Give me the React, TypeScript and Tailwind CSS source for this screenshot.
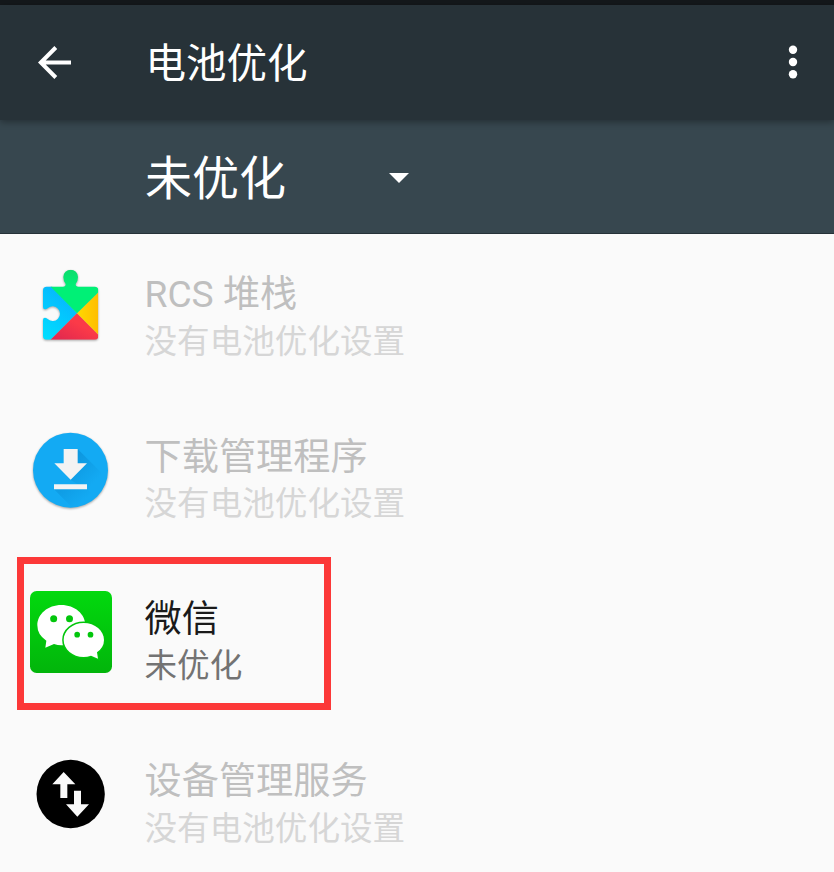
import type { ReactNode } from "react";

function PuzzleIcon() {
  return (
    <svg viewBox="30 34 246 246" className="size-[82px] overflow-visible drop-shadow-[0_1px_1px_rgba(0,0,0,0.35)]">
      <defs>
        <clipPath id="piece">
          <path d="M80 96H129Q137 96 137 88Q130 80 130 67A22 22 0 0 1 174 67Q174 80 167 88Q167 96 175 96H224Q235 96 235 107V244Q235 255 224 255H80Q69 255 69 244V196Q69 189 75 189Q80 189 84 194A22 22 0 1 0 84 160Q80 164 75 164Q69 164 69 157V107Q69 96 80 96Z" />
        </clipPath>
        <linearGradient id="blue" x1="0" y1="1" x2="0.5" y2="0">
          <stop offset="0" stopColor="#00e1ff" />
          <stop offset="1" stopColor="#06b5fd" />
        </linearGradient>
        <linearGradient id="red" x1="1" y1="0" x2="0" y2="1">
          <stop offset="0.4" stopColor="#fb3a48" />
          <stop offset="1" stopColor="#dc2450" />
        </linearGradient>
        <linearGradient id="yellow" x1="0" y1="0" x2="1" y2="0">
          <stop offset="0" stopColor="#ffd800" />
          <stop offset="1" stopColor="#ffbd00" />
        </linearGradient>
        <linearGradient id="green" x1="0" y1="0" x2="0" y2="1">
          <stop offset="0" stopColor="#0fd96c" />
          <stop offset="0.4" stopColor="#00f076" />
          <stop offset="1" stopColor="#00f076" />
        </linearGradient>
      </defs>
      <g clipPath="url(#piece)">
        <path d="M60 90H92L171 176L91 256H60Z" fill="url(#blue)" />
        <path d="M91 256L171 176L236 241V258H89Z" fill="url(#red)" />
        <path d="M236 112L171 176L236 241Z" fill="url(#yellow)" />
        <path d="M92 96V40H236V112L171 176Z" fill="url(#green)" />
      </g>
    </svg>
  );
}

function DownloadIcon() {
  return (
    <svg viewBox="30 26 246 246" className="size-[82px] overflow-visible drop-shadow-[0_1px_1px_rgba(0,0,0,0.35)]">
      <defs>
        <clipPath id="disc">
          <circle cx="151.500" cy="149.500" r="112.500" />
        </clipPath>
        <linearGradient id="long" gradientUnits="userSpaceOnUse" x1="150" y1="130" x2="215" y2="195">
          <stop offset="0" stopColor="#0277bd" stopOpacity="0.35" />
          <stop offset="1" stopColor="#0277bd" stopOpacity="0" />
        </linearGradient>
        <linearGradient id="long2" gradientUnits="userSpaceOnUse" x1="140" y1="200" x2="180" y2="250">
          <stop offset="0" stopColor="#0277bd" stopOpacity="0.25" />
          <stop offset="1" stopColor="#0277bd" stopOpacity="0" />
        </linearGradient>
      </defs>
      <circle cx="151.500" cy="149.500" r="112.500" fill="#13aaf3" />
      <g clipPath="url(#disc)">
        <path d="M173 86L270 183V250L151 178Z" fill="url(#long)" />
        <path d="M102 207H202L260 265H160Z" fill="url(#long2)" />
      </g>
      <path d="M131 86H173V129H201L152 178L103 129H131ZM102 192H201V207H102Z" fill="#f3f3f3" />
    </svg>
  );
}

function WeChatIcon() {
  return (
    <svg viewBox="60 123 246 246" className="-ml-[0.400px] mr-[0.400px] size-[82px]">
      <defs>
        <linearGradient id="wx" x1="0" y1="0" x2="0" y2="1">
          <stop offset="0" stopColor="#02d90e" />
          <stop offset="1" stopColor="#02b50b" />
        </linearGradient>
      </defs>
      <rect x="60" y="123" width="246" height="246" rx="20" fill="url(#wx)" />
      <path d="M154 165C194 165 226 192 226 226C226 260 194 286 154 286Q143 286 132 282L106 293L109 272Q82 255 82 226C82 192 114 165 154 165Z" fill="#fff" />
      <path d="M221 219C255 219 282 242 282 270Q282 292 261 307L264 326L243 317Q232 321 221 321C188 321 161 298 161 270C161 242 188 219 221 219Z" fill="#fff" stroke="#02c60c" strokeWidth="9" paintOrder="stroke" />
      <g fill="#02c60c">
        <circle cx="131" cy="206" r="10.500" />
        <circle cx="178.500" cy="206" r="10.500" />
        <circle cx="201.500" cy="254" r="8.500" />
        <circle cx="241.500" cy="254" r="8.500" />
      </g>
    </svg>
  );
}

function TransferIcon() {
  return (
    <svg viewBox="30 25 246 246" className="size-[82px]">
      <circle cx="152" cy="148" r="102.500" fill="#000" />
      <path d="M131 82L166 119H142V160H121V119H97ZM162 138H183V179H207L172 216L138 179H162Z" fill="#fafafa" />
    </svg>
  );
}

interface AppRowProps {
  icon: ReactNode;
  title: string;
  summary: string;
  enabled?: boolean;
}

function AppRow({ icon, title, summary, enabled = false }: AppRowProps) {
  return (
    <li className="flex h-[162.3px] shrink-0 items-start pl-[30px] pt-[32.4px]">
      {icon}
      <div className="ml-[32.5px] whitespace-nowrap pt-[5px]">
        <div className={`text-[37.2px] leading-[47.4px] ${enabled ? "text-[#1a1a1a]" : "text-[#bfbfbf]"}`}>{title}</div>
        <div className={`text-[32.6px] leading-[47px] ${enabled ? "text-[#737373]" : "text-[#d6d6d6]"}`}>{summary}</div>
      </div>
    </li>
  );
}

export default function App() {
  return (
    <div className="relative flex h-[872px] w-[834px] flex-col overflow-hidden bg-[#fafafa] font-[Roboto,'Noto_Sans_CJK_SC',sans-serif]">
      <div className="h-[5px] shrink-0 bg-[#14181b]" />
      <header className="z-10 flex h-[115px] shrink-0 items-center bg-[#273238] pl-[38px] pr-[36px] text-white shadow-[0_2px_7px_rgba(0,0,0,0.35)]">
        <svg viewBox="0 0 33 33" className="h-[33px] w-[33px]" fill="none" stroke="currentColor" strokeWidth="4">
          <path d="M33 16.500H3M17.800 1.500L2.800 16.500L17.800 31.500" />
        </svg>
        <h1 className="ml-[74.5px] pt-[3px] text-[40.5px] leading-[48px]">电池优化</h1>
        <svg viewBox="0 0 10 34" className="mb-[1px] ml-auto h-[34px] w-[10px]" fill="currentColor">
          <circle cx="5" cy="4.700" r="4.200" />
          <circle cx="5" cy="17" r="4.200" />
          <circle cx="5" cy="29.300" r="4.200" />
        </svg>
      </header>
      <div className="flex h-[114px] shrink-0 items-center border-b border-[#263238] bg-[#37474f] pl-[145px] text-white">
        <span className="pt-[5px] text-[47px] leading-[56px]">未优化</span>
        <svg viewBox="0 0 20 10" className="ml-[103px] mt-[2px] h-[10px] w-[20px]" fill="currentColor">
          <path d="M0 0H20L10 10Z" />
        </svg>
      </div>
      <ul className="flex flex-col">
        <AppRow icon={<PuzzleIcon />} title="RCS 堆栈" summary="没有电池优化设置" />
        <AppRow icon={<DownloadIcon />} title="下载管理程序" summary="没有电池优化设置" />
        <AppRow icon={<WeChatIcon />} title="微信" summary="未优化" enabled />
        <AppRow icon={<TransferIcon />} title="设备管理服务" summary="没有电池优化设置" />
      </ul>
      <div className="absolute left-[17px] top-[557px] h-[153px] w-[314px] border-[7px] border-[#fc3838]" />
    </div>
  );
}
